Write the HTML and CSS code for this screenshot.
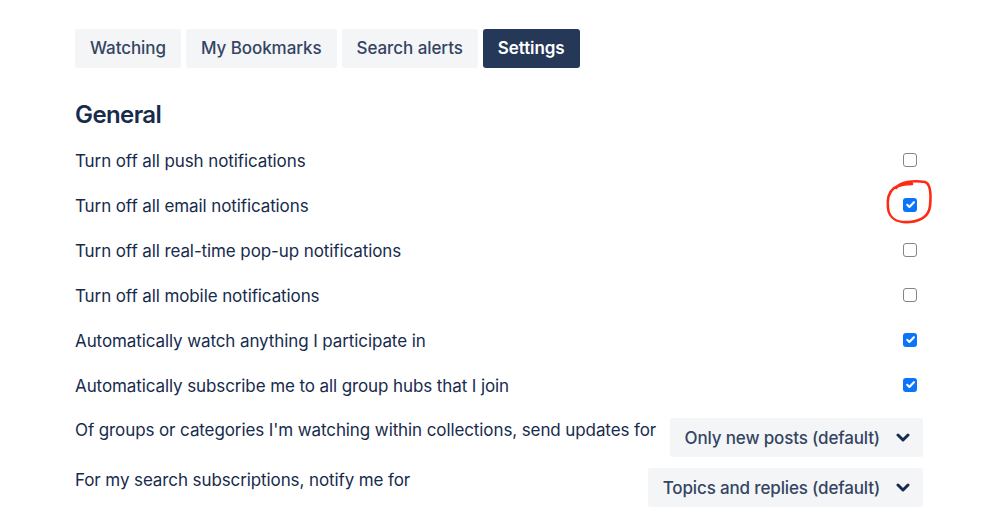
FILE: index.html
```html
<!DOCTYPE html>
<html lang="en">
<head>
<meta charset="utf-8">
<title>Settings</title>
<link rel="stylesheet" href="styles.css">
</head>
<body>
<div class="page">
  <nav class="tabs">
    <a class="tab">Watching</a>
    <a class="tab">My Bookmarks</a>
    <a class="tab">Search alerts</a>
    <a class="tab active">Settings</a>
  </nav>

  <h2 class="heading">General</h2>

  <div class="settings">
    <label class="row"><span class="label">Turn off all push notifications</span><input type="checkbox" class="native"><span class="box"></span></label>
    <label class="row"><span class="label">Turn off all email notifications</span><input type="checkbox" class="native" checked><span class="box on"><svg width="13" height="13" viewBox="0 0 13 13"><path d="M3.2 6.8 L5.4 9 L9.9 4.2" fill="none" stroke="#fff" stroke-width="2.1" stroke-linecap="round" stroke-linejoin="round"/></svg></span></label>
    <label class="row"><span class="label">Turn off all real-time pop-up notifications</span><input type="checkbox" class="native"><span class="box"></span></label>
    <label class="row"><span class="label">Turn off all mobile notifications</span><input type="checkbox" class="native"><span class="box"></span></label>
    <label class="row"><span class="label">Automatically watch anything I participate in</span><input type="checkbox" class="native" checked><span class="box on"><svg width="13" height="13" viewBox="0 0 13 13"><path d="M3.2 6.8 L5.4 9 L9.9 4.2" fill="none" stroke="#fff" stroke-width="2.1" stroke-linecap="round" stroke-linejoin="round"/></svg></span></label>
    <label class="row"><span class="label">Automatically subscribe me to all group hubs that I join</span><input type="checkbox" class="native" checked><span class="box on"><svg width="13" height="13" viewBox="0 0 13 13"><path d="M3.2 6.8 L5.4 9 L9.9 4.2" fill="none" stroke="#fff" stroke-width="2.1" stroke-linecap="round" stroke-linejoin="round"/></svg></span></label>

    <div class="select-row">
      <span class="label">Of groups or categories I'm watching within collections, send updates for</span>
      <div class="select"><span>Only new posts (default)</span><svg class="chev" width="14" height="9" viewBox="0 0 14 9"><path d="M2 2 L7 7 L12 2" fill="none" stroke="#172B4D" stroke-width="3" stroke-linecap="round" stroke-linejoin="round"/></svg></div>
    </div>
    <div class="select-row">
      <span class="label">For my search subscriptions, notify me for</span>
      <div class="select"><span>Topics and replies (default)</span><svg class="chev" width="14" height="9" viewBox="0 0 14 9"><path d="M2 2 L7 7 L12 2" fill="none" stroke="#172B4D" stroke-width="3" stroke-linecap="round" stroke-linejoin="round"/></svg></div>
    </div>
  </div>

  <svg class="annotation" width="60" height="60" viewBox="0 0 60 60">
    <path d="M16 17 C20 11 33 9 45 11 C51 13 51 25 50 35 C49 44 42 50 30 51 C18 52 9 48 8 37 C7 28 9 21 14 17 C19 14 26 13 32 13" fill="none" stroke="#ff2a14" stroke-width="2.6" stroke-linecap="round" stroke-linejoin="round"/>
  </svg>
</div>
</body>
</html>
```

FILE: styles.css
```css
* { box-sizing: border-box; }

html, body {
  margin: 0;
  padding: 0;
  background: #ffffff;
}

body {
  font-family: Inter, "Noto Sans", "Liberation Sans", sans-serif;
  color: #172B4D;
}

.page {
  position: relative;
  width: 998px;
  padding: 29px 0 0 75px;
}

.tabs {
  display: flex;
  gap: 5px;
}

.tab {
  display: block;
  height: 39px;
  line-height: 39px;
  padding: 0 15px;
  background: #F4F5F7;
  border-radius: 3px;
  color: #344563;
  font-size: 17px;
  font-weight: 500;
  letter-spacing: -0.07px;
  cursor: pointer;
}

.tab.active {
  background: #253858;
  color: #ffffff;
  font-weight: 600;
}

.heading {
  margin: 32px 0 7px;
  height: 30px;
  line-height: 30px;
  font-size: 24px;
  font-weight: 600;
  letter-spacing: -0.6px;
  color: #172B4D;
}

.settings {
  width: 848px;
}

.row {
  display: flex;
  align-items: center;
  height: 45px;
}

.label {
  font-size: 17px;
  line-height: 24px;
  letter-spacing: -0.1px;
  color: #172B4D;
  padding-top: 2px;
  margin-right: auto;
}

.native {
  display: none;
}

.box {
  display: block;
  width: 14px;
  height: 14px;
  margin-right: 6px;
  border: 1.5px solid #858585;
  border-radius: 3px;
  background: #ffffff;
  position: relative;
}

.box.on {
  border: none;
  background: #0A74FA;
}

.box svg {
  display: block;
  margin: 0.5px;
}

.select-row {
  display: flex;
  align-items: flex-start;
  justify-content: space-between;
  margin-top: 11px;
}

.select-row .label {
  padding-top: 0;
  margin-right: 0;
}

.select {
  display: flex;
  align-items: center;
  gap: 16px;
  height: 39px;
  padding: 0 13px 0 15px;
  background: #F4F5F7;
  border-radius: 3px;
  color: #344563;
  font-size: 17px;
  font-weight: 500;
  letter-spacing: -0.15px;
}

.chev {
  display: block;
}

.annotation {
  position: absolute;
  left: 880px;
  top: 171px;
}
```
